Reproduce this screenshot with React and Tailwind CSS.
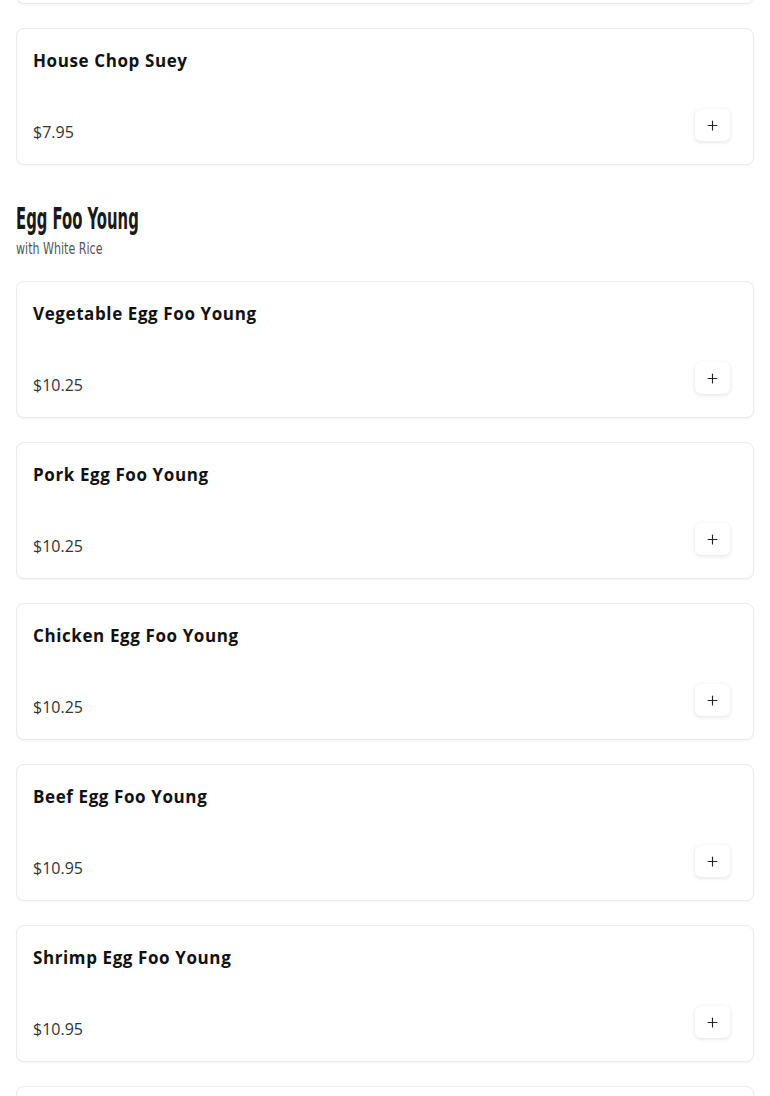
import { Plus } from 'lucide-react';

const sections = [
  {
    title: null,
    items: [
      { name: 'Chicken Chop Suey', price: '$7.95' },
      { name: 'House Chop Suey', price: '$7.95' },
    ],
  },
  {
    title: 'Egg Foo Young',
    subtitle: 'with White Rice',
    items: [
      { name: 'Vegetable Egg Foo Young', price: '$10.25' },
      { name: 'Pork Egg Foo Young', price: '$10.25' },
      { name: 'Chicken Egg Foo Young', price: '$10.25' },
      { name: 'Beef Egg Foo Young', price: '$10.95' },
      { name: 'Shrimp Egg Foo Young', price: '$10.95' },
      { name: 'House Egg Foo Young', price: '$10.95' },
    ],
  },
];

function MenuCard({ item }) {
  return (
    <div className="h-[137px] flex flex-col justify-between bg-white border border-[#ebebeb] rounded-lg shadow-[0_1px_2px_rgba(0,0,0,0.05)] px-4 py-5">
      <div className="font-['Open_Sans',sans-serif] font-bold text-[17px] tracking-[0.6px] leading-6 text-[#111]">
        {item.name}
      </div>
      <div className="flex items-end justify-between">
        <span className="font-['Open_Sans',sans-serif] text-base leading-6 text-[#333]">{item.price}</span>
        <button className="w-[35px] h-8 mb-[3px] mr-[7px] rounded-md bg-white flex items-center justify-center text-[#222] shadow-[0_1px_4px_rgba(0,0,0,0.12)]">
          <Plus size={15} strokeWidth={1.8} />
        </button>
      </div>
    </div>
  );
}

export default function App() {
  return (
    <div className="min-h-screen bg-white px-4 overflow-hidden">
      <div className="-mt-[133px]">
        {sections.map((section, i) => (
          <div key={i} className={i > 0 ? 'mt-9' : ''}>
            {section.title && (
              <div className="mb-[23px] leading-5">
                <h2 className="inline-block origin-left scale-x-[0.55] font-['DejaVu_Sans_Condensed',sans-serif] font-bold text-[30px] leading-9 whitespace-nowrap text-[#1a1a1a]">
                  {section.title}
                </h2>
                <div className="mt-[1px] h-5 leading-5">
                  <span className="inline-block origin-left scale-x-[0.77] font-['DejaVu_Sans_Condensed',sans-serif] text-base leading-5 whitespace-nowrap text-[#555]">
                    {section.subtitle}
                  </span>
                </div>
              </div>
            )}
            <div className="flex flex-col gap-6">
              {section.items.map(item => (
                <MenuCard key={item.name} item={item} />
              ))}
            </div>
          </div>
        ))}
      </div>
    </div>
  );
}
